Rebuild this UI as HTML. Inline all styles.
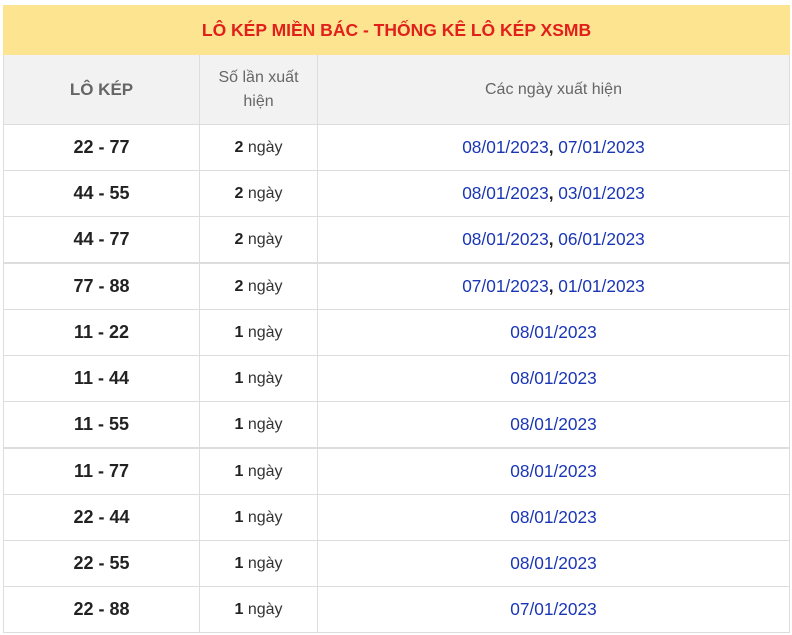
<!DOCTYPE html>
<html><head><meta charset="utf-8"><style>
body{margin:0;background:#fff;font-family:"Liberation Sans",Arial,sans-serif;}
table{position:absolute;left:3px;top:5px;width:787px;border-collapse:collapse;table-layout:fixed;}
td,th{border:1px solid #ddd;text-align:center;padding:0;}
.t{background:#fde490;color:#e1201c;font-weight:bold;font-size:17.5px;height:48px;}
.h th{background:#f2f2f2;color:#666;font-weight:normal;font-size:16px;height:69px;line-height:24px;}
.h th.b{font-weight:bold;font-size:17px;}
td{height:45px;font-size:16px;color:#333;}
td.a{font-weight:bold;font-size:18px;color:#222;}
td.n b{color:#222;}
td.d{color:#1a36b4;font-size:17.3px;}
td.d span{color:#222;font-weight:bold;}
tr.k td{border-top:2px solid #ddd;}
</style></head><body>
<table>
<col style="width:196px"><col style="width:118px"><col>
<tr><td class="t" colspan="3" style="border-color:#fde490">LÔ KÉP MIỀN BÁC - THỐNG KÊ LÔ KÉP XSMB</td></tr>
<tr class="h"><th class="b">LÔ KÉP</th><th>Số lần xuất<br>hiện</th><th>Các ngày xuất hiện</th></tr>
<tr><td class="a">22 - 77</td><td class="n"><b>2</b> ngày</td><td class="d">08/01/2023<span>,</span> 07/01/2023</td></tr>
<tr><td class="a">44 - 55</td><td class="n"><b>2</b> ngày</td><td class="d">08/01/2023<span>,</span> 03/01/2023</td></tr>
<tr><td class="a">44 - 77</td><td class="n"><b>2</b> ngày</td><td class="d">08/01/2023<span>,</span> 06/01/2023</td></tr>
<tr class="k"><td class="a">77 - 88</td><td class="n"><b>2</b> ngày</td><td class="d">07/01/2023<span>,</span> 01/01/2023</td></tr>
<tr><td class="a">11 - 22</td><td class="n"><b>1</b> ngày</td><td class="d">08/01/2023</td></tr>
<tr><td class="a">11 - 44</td><td class="n"><b>1</b> ngày</td><td class="d">08/01/2023</td></tr>
<tr><td class="a">11 - 55</td><td class="n"><b>1</b> ngày</td><td class="d">08/01/2023</td></tr>
<tr class="k"><td class="a">11 - 77</td><td class="n"><b>1</b> ngày</td><td class="d">08/01/2023</td></tr>
<tr><td class="a">22 - 44</td><td class="n"><b>1</b> ngày</td><td class="d">08/01/2023</td></tr>
<tr><td class="a">22 - 55</td><td class="n"><b>1</b> ngày</td><td class="d">08/01/2023</td></tr>
<tr><td class="a">22 - 88</td><td class="n"><b>1</b> ngày</td><td class="d">07/01/2023</td></tr>
</table>
</body></html>
